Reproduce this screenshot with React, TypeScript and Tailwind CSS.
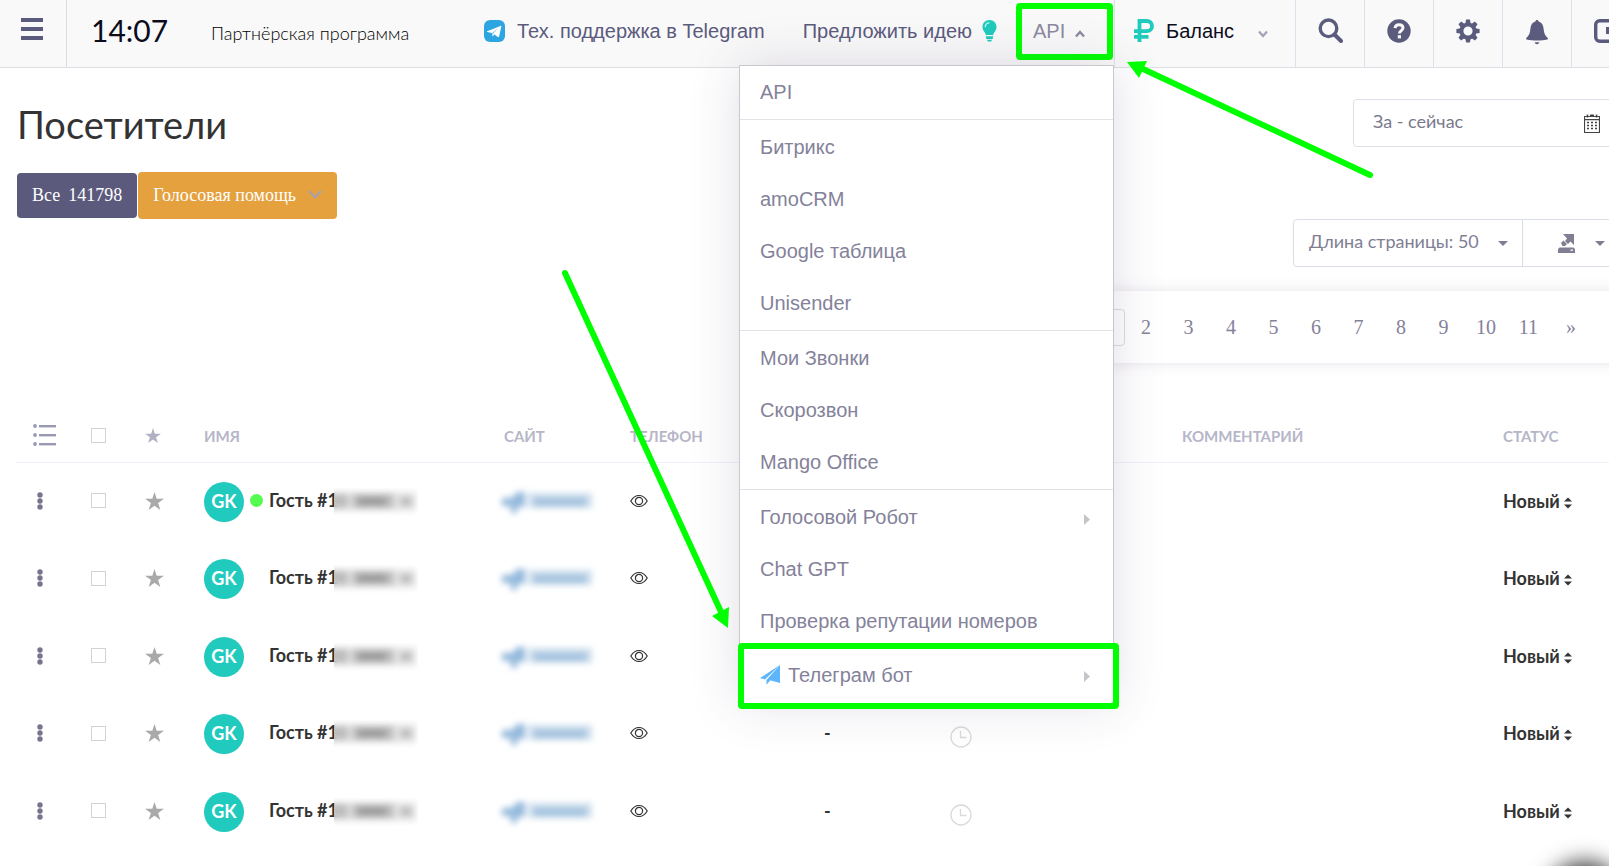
import React from "react";

const sans = "font-['Liberation_Sans',Arial,sans-serif]";
const serif = "font-['Liberation_Serif','Times_New_Roman',serif]";

type MenuItem = { label: string; arrow?: boolean; plane?: boolean };

const menuGroups: MenuItem[][] = [
  [{ label: "API" }],
  [{ label: "Битрикс" }, { label: "amoCRM" }, { label: "Google таблица" }, { label: "Unisender" }],
  [{ label: "Мои Звонки" }, { label: "Скорозвон" }, { label: "Mango Office" }],
  [
    { label: "Голосовой Робот", arrow: true },
    { label: "Chat GPT" },
    { label: "Проверка репутации номеров" },
    { label: "Телеграм бот", arrow: true, plane: true },
  ],
];

const visitors = [
  { id: 1, online: true, call: "" },
  { id: 2, online: false, call: "" },
  { id: 3, online: false, call: "" },
  { id: 4, online: false, call: "-" },
  { id: 5, online: false, call: "-" },
];

const pages = ["2", "3", "4", "5", "6", "7", "8", "9", "10", "11", "»"];

function TelegramIcon() {
  return (
    <svg viewBox="0 0 21 22" className="h-[22px] w-[21px]" aria-hidden="true">
      <rect width="21" height="22" rx="6" fill="#2ca5e0" />
      <path d="M3.2 11.2 16.4 5.9c.6-.2 1.1.1.9.9l-2.200 9.600c-.2.8-.7.9-1.300.6l-3.300-2.500-1.700 1.600c-.3.3-.7.2-.7-.2l-.2-3L3.200 11.900c-.4-.2-.4-.5 0-.7z" fill="#fff" />
      <path d="m8 12.900 6-4.700-4.700 5.300-.5 2.600z" fill="#2ca5e0" opacity=".6" />
    </svg>
  );
}

function BulbIcon() {
  return (
    <svg viewBox="0 0 15 22" className="h-[22px] w-[15px]" aria-hidden="true">
      <path d="M7.500 0C3.300 0 .5 3.200.5 6.900c0 2.500 1.100 3.900 2.100 5.300.6.900 1 1.700 1.200 2.800h7.400c.2-1.100.6-1.900 1.200-2.800 1-1.400 2.100-2.800 2.100-5.300C14.500 3.200 11.700 0 7.500 0z" fill="#1fcbbd" />
      <path d="M3.300 6.600c.1-2 1.500-3.500 3.500-3.800" stroke="#d7f5f2" strokeWidth="1.200" fill="none" strokeLinecap="round" />
      <path d="M3.800 16.300h7.400l-.5 2.700H4.300zM5 19.700h5l-.8 1.800H5.800z" fill="#1fcbbd" />
    </svg>
  );
}

function Chevron({ up = false, className = "" }: { up?: boolean; className?: string }) {
  return (
    <svg viewBox="0 0 10 8" className={"h-2 w-2.5 shrink-0 " + className} aria-hidden="true">
      <path d={up ? "M1 6.500 5 2l4 4.500" : "M1 1.500 5 6l4-4.500"} fill="none" stroke="currentColor" strokeWidth="2.400" />
    </svg>
  );
}

function RubleIcon() {
  return (
    <svg viewBox="0 0 20 23" className="h-[23px] w-5" aria-hidden="true">
      <path d="M5.500 23V2h7.200c3.300 0 5.300 2 5.300 5s-2 5.200-5.300 5.200H0M0 17.800h14.500" fill="none" stroke="#1fcbbd" strokeWidth="3.800" />
    </svg>
  );
}

function SearchIcon() {
  return (
    <svg viewBox="0 0 25 25" className="size-[25px]" aria-hidden="true">
      <circle cx="10.500" cy="10.300" r="8.300" fill="none" stroke="currentColor" strokeWidth="3.400" />
      <path d="m16.500 16.500 6.500 6.500" stroke="currentColor" strokeWidth="4" strokeLinecap="round" />
    </svg>
  );
}

function HelpIcon() {
  return (
    <svg viewBox="0 0 24 24" className="size-6" aria-hidden="true">
      <circle cx="12" cy="12" r="11.700" fill="currentColor" />
      <path d="M8 9.200C8.200 7 9.800 5.800 12 5.800c2.400 0 4 1.300 4 3.200 0 2.400-3.600 2.800-3.600 5.500" fill="none" stroke="#f9f9f9" strokeWidth="2.900" />
      <rect x="10.800" y="16.200" width="3.200" height="3.200" fill="#f9f9f9" />
    </svg>
  );
}

function GearIcon() {
  return (
    <svg viewBox="-12 -12 24 24" className="size-6" aria-hidden="true">
      {[0, 45, 90, 135, 180, 225, 270, 315].map((a) => (
        <path key={a} d="M-2.800-6.500-1.900-11.600h3.800l.9 5.100z" fill="currentColor" transform={"rotate(" + a + ")"} />
      ))}
      <circle r="6.600" fill="none" stroke="currentColor" strokeWidth="4" />
    </svg>
  );
}

function BellIcon() {
  return (
    <svg viewBox="0 0 22 25" className="mt-1 h-[25px] w-[22px]" aria-hidden="true">
      <path d="M11 0c1 0 1.500.6 1.600 1.500 3.200.9 4.700 3.500 5 7.200.3 4.200 1.200 6.500 4.100 9.300.5.6.3 1.200-.4 1.400-3 .7-6.400 1-10.300 1s-7.300-.3-10.300-1c-.7-.2-.9-.8-.4-1.400 2.900-2.800 3.800-5.100 4.100-9.300.3-3.700 1.800-6.300 5-7.200C9.500.6 10 0 11 0zM8.700 22.300h4.600c-.3 1.200-1.100 2-2.300 2s-2-.8-2.300-2z" fill="currentColor" />
    </svg>
  );
}

function PanelIcon() {
  return (
    <svg viewBox="0 0 24 24" className="size-6" aria-hidden="true">
      <rect x="1.700" y="1.700" width="20.600" height="20.600" rx="4" fill="none" stroke="currentColor" strokeWidth="3.400" />
      <rect x="12" y="8" width="10" height="7" fill="currentColor" />
    </svg>
  );
}

function PlaneIcon() {
  return (
    <svg viewBox="0 0 20 20" className="size-5" aria-hidden="true">
      <path d="M20 0 0 13l5 1.500zM20 0 6.500 15v4.800l3-3.600zM20 0 9 15l11 3z" fill="#5eb5fb" />
    </svg>
  );
}

function ListIcon() {
  return (
    <svg viewBox="0 0 23 22" className="h-[22px] w-[23px]" fill="#9a99b3" aria-hidden="true">
      {[2, 11, 20].map((y) => (
        <g key={y}>
          <circle cx="2" cy={y} r="1.900" />
          <rect x="6" y={y - 1} width="17" height="2.400" />
        </g>
      ))}
    </svg>
  );
}

function StarIcon({ className }: { className: string }) {
  return (
    <svg viewBox="0 0 20 19" className={className} fill="currentColor" aria-hidden="true">
      <path d="m10 0 2.300 7.200H20l-6.200 4.500 2.400 7.300-6.200-4.500L3.800 19l2.400-7.300L0 7.200h7.700z" />
    </svg>
  );
}

function EyeIcon() {
  return (
    <svg viewBox="0 0 18 14" className="h-3.5 w-[18px]" fill="none" stroke="#333" strokeWidth="1.200" aria-hidden="true">
      <path d="M.8 7C3 3.300 5.800 1.500 9 1.500S15 3.300 17.200 7C15 10.700 12.200 12.500 9 12.500S3 10.700.8 7z" />
      <circle cx="9" cy="7" r="3.600" />
    </svg>
  );
}

function ClockIcon() {
  return (
    <svg viewBox="0 0 22 22" className="size-[22px]" fill="none" stroke="#dadada" strokeWidth="1.300" aria-hidden="true">
      <circle cx="11" cy="11" r="10" />
      <path d="M10.500 5v6.500h6" />
    </svg>
  );
}

function CalendarIcon() {
  return (
    <svg viewBox="0 0 16 19" className="h-[19px] w-4" aria-hidden="true">
      <path d="M.5 2.500h15v16H.5zM.5 5.700h15" fill="none" stroke="#444" strokeWidth="1.200" />
      <path d="M3.500.5v3M12.500.5v3M6 1.200h4" stroke="#444" strokeWidth="1.500" />
      {[8.500, 11.500, 14.500].map((y) => (
        <path key={y} d={"M3 " + y + "h10"} stroke="#444" strokeWidth="1.600" strokeDasharray="2 2" />
      ))}
    </svg>
  );
}

function ExportIcon() {
  return (
    <svg viewBox="0 0 17 19" className="h-[19px] w-[17px]" fill="currentColor" aria-hidden="true">
      <path d="M5 0h11v11l-3.500-3.500L10 10 7 7l2-2.500zM3 9l2.500-2.500L9 10l-2 2H4.500zM1.500 13.500h14L17 15v4H0v-4zM12.500 15.500v1.200H15v-1.200z" fillRule="evenodd" />
    </svg>
  );
}

function Caret() {
  return (
    <svg viewBox="0 0 10 5" className="h-[5px] w-2.5" fill="currentColor" aria-hidden="true">
      <path d="M0 0h10L5 5z" />
    </svg>
  );
}

function HiddenNumber() {
  return (
    <span className="relative -ml-1 block h-7 w-[84px] overflow-hidden" aria-hidden="true">
      <svg viewBox="0 0 84 28" className="h-full w-full">
        <defs>
          <filter id="soft" x="-20%" y="-50%" width="140%" height="200%">
            <feGaussianBlur stdDeviation="3" />
          </filter>
        </defs>
        <g filter="url(#soft)">
          <path d="M-10 4h92v19H-10z" fill="#e6e6e6" />
          <path d="M-10 6h24v14H-10zM18 6h42v14H18zM66 9h12v9H66z" fill="#bdbdbd" />
          <path d="M24 9h28v9H24z" fill="#9c9c9c" />
        </g>
      </svg>
    </span>
  );
}

function HiddenSite() {
  return (
    <svg viewBox="0 0 104 28" className="-ml-2 h-7 w-[104px] blur-[3px]" aria-hidden="true">
      <path d="M6 11h10l5-6h8v15h-8v6h-6v-7H6z" fill="#94b9dc" />
      <path d="M32 6h64v15H32z" fill="#cfdfed" />
      <path d="M38 11h52v8H38z" fill="#a3c2de" />
    </svg>
  );
}

function TickBox({ label }: { label: string }) {
  return (
    <input
      type="checkbox"
      aria-label={label}
      className="mx-auto block size-[15px] appearance-none border border-[#d2d2d8] bg-white"
    />
  );
}

function ApiMenu() {
  return (
    <div
      className={"absolute top-[65px] right-0 z-20 w-[375px] rounded-b border border-[#c8c9cd] bg-white text-xl text-[#84829a] shadow-[0_0_50px_0_rgba(82,63,105,0.18)] " + sans}
    >
      {menuGroups.map((group, i) => (
        <ul key={i} className="border-b border-[#e3e3e6] py-px first:pt-0 last:border-b-0">
          {group.map((item) => (
            <li key={item.label} className="relative">
              <a
                href="#"
                className={item.plane ? "flex h-[55px] items-center gap-2 px-5" : "flex h-[52px] items-center px-5"}
              >
                {item.plane && <PlaneIcon />}
                <span className="flex-1">{item.label}</span>
                {item.arrow && (
                  <svg viewBox="0 0 6 11" className="mt-1 mr-[3px] h-[11px] w-1.5" fill="#c4c4c9" aria-hidden="true">
                    <path d="M0 0v11l6-5.500z" />
                  </svg>
                )}
              </a>
              {item.plane && (
                <span className="pointer-events-none absolute -top-1 -right-[6px] -bottom-[7px] -left-[2px] rounded-sm border-6 border-[#00ff00]" />
              )}
            </li>
          ))}
        </ul>
      ))}
    </div>
  );
}

function Header() {
  const cell = "flex w-[69px] items-center justify-center border-l border-[#dfe1ea] pb-1.5 text-[#5b5b7e] last:w-17";
  return (
    <header className="flex h-17 border-b border-[#dcdfe3] bg-[#f9f9f9]">
      <button type="button" aria-label="Меню" className="flex w-[67px] items-center border-r border-[#d9dde6] pb-2.5 pl-[21px]">
        <svg viewBox="0 0 22 22" className="size-[22px]" fill="#5b5b7e" aria-hidden="true">
          <path d="M0 0h22v4H0zM0 9h22v4H0zM0 18h22v4H0z" />
        </svg>
      </button>
      <time className="ml-6 pt-3 text-[30px] leading-9 text-[#0c0c1d]">14:07</time>
      <a href="#" className="ml-[43px] pt-[21px] text-lg leading-6 font-light text-black">
        Партнёрская программа
      </a>
      <nav className={"ml-auto flex text-xl text-[#5b5b7e] " + sans}>
        <a href="#" className="mr-[38px] flex items-center gap-3 pb-1.5">
          <TelegramIcon />
          Тех. поддержка в Telegram
        </a>
        <a href="#" className="mr-5 flex items-center gap-2.5 pb-1.5">
          Предложить идею
          <BulbIcon />
        </a>
        <div className="relative w-[97px]">
          <button type="button" aria-expanded="true" className="flex h-full w-full items-center gap-2.5 pb-1.5 pl-4 text-[#8b89a1]">
            API
            <Chevron up className="mt-1.5" />
          </button>
          <span className="pointer-events-none absolute top-[3px] -left-px h-[57px] w-[97px] rounded-sm border-6 border-[#00ff00]" />
          <ApiMenu />
        </div>
        <button type="button" className="flex w-[181px] items-center border-l border-[#dfe1ea] pb-1.5 pl-[19px] text-[#0c0c1d]">
          <RubleIcon />
          <span className="ml-3">Баланс</span>
          <Chevron className="mt-1.5 ml-6 text-[#a5a4b8]" />
        </button>
        <button type="button" aria-label="Поиск" className={cell}><SearchIcon /></button>
        <button type="button" aria-label="Помощь" className={cell}><HelpIcon /></button>
        <button type="button" aria-label="Настройки" className={cell}><GearIcon /></button>
        <button type="button" aria-label="Уведомления" className={cell}><BellIcon /></button>
        <button type="button" aria-label="Панель" className={cell}><PanelIcon /></button>
      </nav>
    </header>
  );
}

function Toolbar() {
  return (
    <div className="flex justify-between pl-[17px]">
      <div>
        <h1 className="mt-8 text-[38px] leading-12 text-[#333]">Посетители</h1>
        <div className={"mt-6 flex items-center gap-px text-lg text-white " + serif}>
          <button type="button" className="flex h-[45px] items-center gap-2 rounded bg-[#5b5a7c] px-[15px] pb-0.5">
            <span>Все</span>
            <span>141798</span>
          </button>
          <button type="button" className="flex h-[47px] items-center rounded bg-[#e5a13e] px-[15px] pb-0.5">
            Голосовая помощь
            <svg viewBox="0 0 14 9" className="ml-3 h-[9px] w-3.5" fill="none" stroke="#a3a1b0" strokeWidth="2" aria-hidden="true">
              <path d="m1 1 6 6.500L13 1" />
            </svg>
          </button>
        </div>
      </div>
      <div className="flex flex-col items-end">
        <label className="mt-[31px] mr-4 flex h-12 w-[270px] items-center justify-between rounded border border-[#dcdfe8] pr-[22px] pl-[19px]">
          <input aria-label="Период" defaultValue="За - сейчас" className="w-40 bg-transparent pb-1 text-lg text-[#7a7a8c] outline-none" />
          <CalendarIcon />
        </label>
        <div className="mt-[72px] mr-4 flex h-12 w-[330px] rounded border border-[#d9dde8] text-[#7f7e93]">
          <button type="button" className="flex w-[229px] items-center justify-between border-r border-[#d9dde8] pr-3.5 pl-[15px] text-lg">
            <span className="pb-1">Длина страницы: 50</span>
            <Caret />
          </button>
          <button type="button" aria-label="Экспорт" className="flex flex-1 items-center justify-between pr-[17px] pl-[35px]">
            <ExportIcon />
            <Caret />
          </button>
        </div>
      </div>
    </div>
  );
}

function Pagination() {
  return (
    <nav
      aria-label="Страницы"
      className={"mt-6 ml-auto flex h-[72px] w-[640px] items-center justify-end bg-white pr-[47px] text-xl text-[#84829a] shadow-[0_0_13px_0_rgba(82,63,105,0.14)] " + serif}
    >
      <a href="#" className="flex h-[37px] w-[37px] items-center justify-center rounded border border-[#d9dde8]">1</a>
      {pages.map((p) => (
        <a key={p} href="#" className="flex w-[43px] justify-center even:w-[42px]">
          {p}
        </a>
      ))}
    </nav>
  );
}

function VisitorsTable() {
  return (
    <table className="mt-[42px] ml-4 w-[calc(100%-16px)] table-fixed text-left">
      <colgroup>
        <col className="w-[55px]" />
        <col className="w-[54px]" />
        <col className="w-[79px]" />
        <col className="w-[300px]" />
        <col className="w-[126px]" />
        <col className="w-[194px]" />
        <col className="w-[126px]" />
        <col className="w-[232px]" />
        <col className="w-[321px]" />
        <col />
      </colgroup>
      <thead className="text-[15px] font-bold text-[#b6b6c8]">
        <tr className="h-[57px] border-b border-[#f0f1f9] *:pt-1">
          <th className="pl-[17px]"><ListIcon /></th>
          <th><TickBox label="Выбрать всех" /></th>
          <th className="pl-5"><StarIcon className="h-[15px] w-4 text-[#b0afc4]" /></th>
          <th><span className="block pt-0.5">ИМЯ</span></th>
          <th><span className="block pt-0.5">САЙТ</span></th>
          <th><span className="block pt-0.5">ТЕЛЕФОН</span></th>
          <th />
          <th />
          <th><span className="block pt-0.5">КОММЕНТАРИЙ</span></th>
          <th><span className="block pt-0.5">СТАТУС</span></th>
        </tr>
      </thead>
      <tbody className="text-lg font-bold text-[#333]">
        {visitors.map((v) => (
          <tr key={v.id} className="h-[77px] even:h-[78px]">
            <td className="pl-[21px]">
              <svg viewBox="0 0 6 18" className="h-[18px] w-1.5" fill="#76748e" aria-hidden="true">
                <circle cx="3" cy="3" r="2.700" />
                <circle cx="3" cy="9" r="2.700" />
                <circle cx="3" cy="15" r="2.700" />
              </svg>
            </td>
            <td><TickBox label={"Выбрать гостя " + v.id} /></td>
            <td className="pl-5"><StarIcon className="h-[18px] w-[19px] text-[#a9a9a9]" /></td>
            <td className="pt-0.5">
              <div className="flex items-center">
                <span className="flex size-10 items-center justify-center rounded-full bg-[#20cabd] pb-0.5 text-white">GK</span>
                <span className={v.online ? "mx-1.5 mb-0.5 size-[13px] rounded-full bg-[#55fb50]" : "mx-1.5 size-[13px]"} />
                <span className="pb-1 whitespace-nowrap">Гость #1</span>
                <HiddenNumber />
              </div>
            </td>
            <td><HiddenSite /></td>
            <td><EyeIcon /></td>
            <td>{v.call}</td>
            <td className="pt-2"><ClockIcon /></td>
            <td />
            <td>
              <button type="button" className="flex items-center gap-1">
                Новый
                <svg viewBox="0 0 8 12" className="mt-1 h-3 w-2" fill="currentColor" aria-hidden="true">
                  <path d="M0 4.500h8L4 .5zM0 7.500h8l-4 4z" />
                </svg>
              </button>
            </td>
          </tr>
        ))}
      </tbody>
    </table>
  );
}

function Annotations() {
  return (
    <svg viewBox="0 0 1609 866" className="pointer-events-none absolute top-0 left-0 z-30 h-[866px] w-[1609px]" aria-hidden="true">
      <path d="M565 273 722 614M1370 175 1143 69" stroke="#00ff00" strokeWidth="6" strokeLinecap="round" />
      <path d="m712 616 17-9-1 21zM1127 62l20-1-8 17z" fill="#00ff00" />
    </svg>
  );
}

export default function App() {
  return (
    <div className="relative min-h-screen overflow-hidden bg-white font-[Lato,'Open_Sans',sans-serif]">
      <div className="w-[calc(100%+30px)]">
        <Header />
        <main>
          <Toolbar />
          <Pagination />
          <VisitorsTable />
        </main>
      </div>
      <Annotations />
      <div className="absolute -right-2 -bottom-17 size-16 rounded-full shadow-[0_0_22px_8px_rgba(0,0,0,0.8)]" />
    </div>
  );
}
